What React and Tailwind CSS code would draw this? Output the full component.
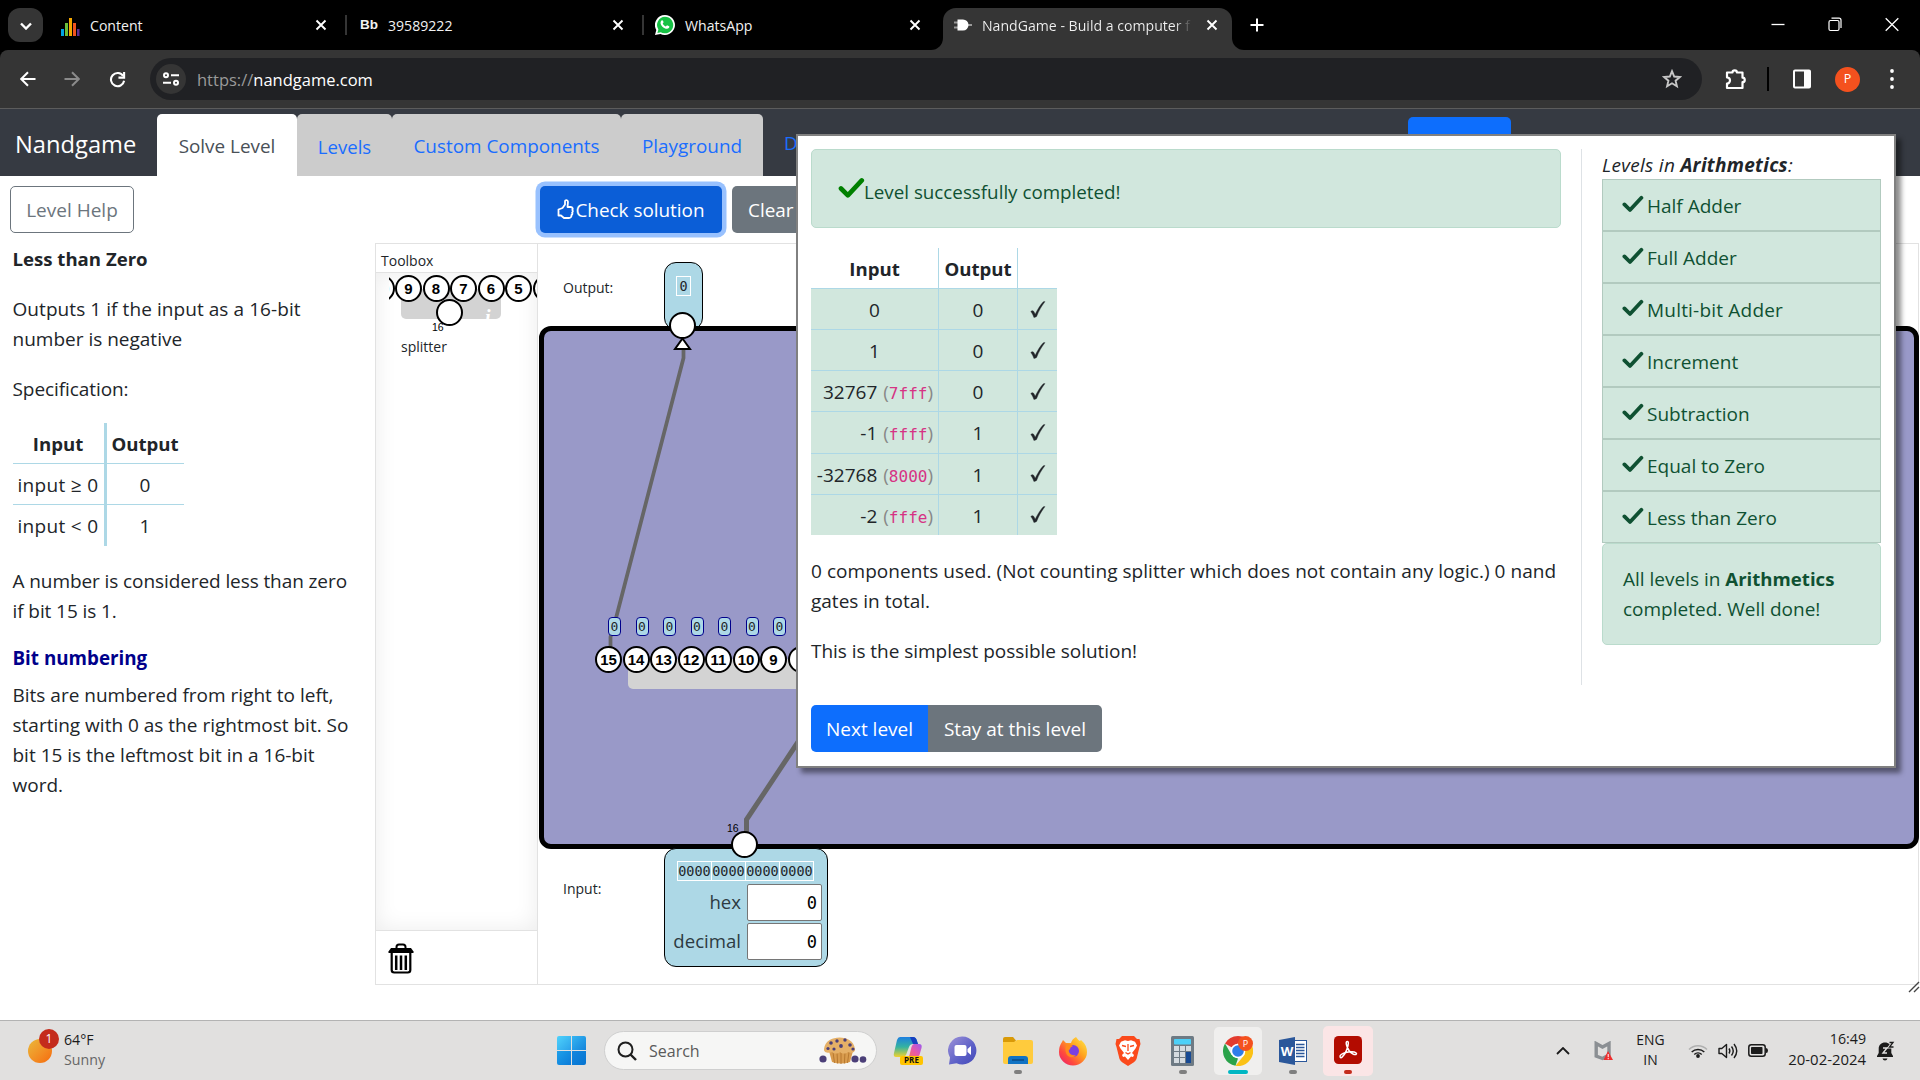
const DIGITS = "font-['DejaVu_Sans_Mono',monospace]";

function Check({ className }) {
  return (
    <svg viewBox="0 0 22 18" className={className} fill="none" stroke="currentColor" strokeWidth="3.8" strokeLinecap="round" strokeLinejoin="round">
      <path d="M2.4 9.4 8 15 19.4 2.8" />
    </svg>
  );
}

function CloseX({ className = "" }) {
  return (
    <svg viewBox="0 0 12 12" className={"size-3 shrink-0 " + className} fill="none" stroke="#fff" strokeWidth="1.9">
      <path d="M1.5 1.5 10.5 10.5M10.5 1.5 1.5 10.5" />
    </svg>
  );
}

function TabStrip() {
  return (
    <div className="flex h-[50px] bg-black text-[14.1px] leading-[50px] text-[#f2f2f2]">
      <div className="mt-2 ml-2 grid h-[34px] w-[35px] place-items-center rounded-xl bg-[#353535]">
        <svg viewBox="0 0 12 8" className="mt-px h-2 w-3" fill="none" stroke="#fff" strokeWidth="2.4"><path d="M1 1.5 6 6.5 11 1.5" /></svg>
      </div>
      <div className="flex w-[304px] items-center pl-[17px]">
        <svg viewBox="0 0 20 18" className="mt-1 h-[18px] w-5">
          <rect x="1" y="11" width="3" height="7" fill="#00a4e4" />
          <rect x="5" y="5" width="3" height="13" fill="#6bbf3a" />
          <rect x="9" y="0" width="3" height="18" fill="#f5a800" />
          <rect x="13" y="5" width="3" height="13" fill="#f0541e" />
          <rect x="17" y="11" width="2.5" height="7" fill="#5c2d91" />
        </svg>
        <span className="mt-px ml-[10px]">Content</span>
        <CloseX className="mr-[18px] ml-auto" />
        <span className="h-5 w-[2px] bg-[#353535]" />
      </div>
      <div className="flex w-[297px] items-center pl-[13px]">
        <span className="w-[28px] font-['Liberation_Sans',sans-serif] text-[13.5px]">
          <span className="font-bold">Bb</span>
        </span>
        <span className="mt-px">39589222</span>
        <CloseX className="mr-[18px] ml-auto" />
        <span className="h-5 w-[2px] bg-[#353535]" />
      </div>
      <div className="flex w-[299px] items-center pl-[11px]">
        <svg viewBox="0 0 20 20" className="size-5">
          <path d="M10 0a10 10 0 1 1-4.6 18.9L0 20l1.300-5A10 10 0 0 1 10 0z" fill="#fff" />
          <path d="M10 1.700a8.300 8.300 0 1 1-4.200 15.500L2.400 17.900l1-3.400A8.300 8.300 0 0 1 10 1.700z" fill="#16c144" />
          <path d="M6.500 5.500c.6-.6 1.200-.4 1.500.3l.6 1.500-.9 1.300c.7 1.400 1.700 2.300 3.100 2.900l1.200-1.200 1.700.8c.8.4.8 1 .3 1.700-1 1.300-2.600 1.300-4.300.5-2-1-3.400-2.500-4-4.300-.4-1.400 0-2.800.8-3.500z" fill="#fff" />
        </svg>
        <span className="mt-px ml-[10px]">WhatsApp</span>
        <CloseX className="mr-[22px] ml-auto" />
      </div>
      <div className="relative mt-2 flex h-[42px] w-[289px] items-center rounded-t-[13px] bg-[#353535] pl-[10px] leading-[34px] before:absolute before:bottom-0 before:-left-3 before:size-3 before:rounded-br-xl before:shadow-[4px_4px_0_4px_#353535] before:[clip-path:inset(0)] after:absolute after:-right-3 after:bottom-0 after:size-3 after:rounded-bl-xl after:shadow-[-4px_4px_0_4px_#353535] after:[clip-path:inset(0)]">
        <svg viewBox="0 0 20 14" className="mb-2 h-[14px] w-5">
          <path d="M1 4.500h5M1 9.500h5M14 7h5" stroke="#9a9a9a" strokeWidth="2" />
          <path d="M4.500 1.500h5.500a5.500 5.500 0 0 1 0 11H4.500z" fill="#fff" />
        </svg>
        <span className="mb-[7px] ml-[9px] w-[210px] overflow-hidden bg-linear-to-r from-[#f2f2f2] from-92% to-[#353535] bg-clip-text whitespace-nowrap text-transparent">NandGame - Build a computer f</span>
        <CloseX className="mb-2 ml-[14px]" />
      </div>
      <svg viewBox="0 0 14 14" className="mt-[18px] ml-[18px] size-[14px]" stroke="#fff" strokeWidth="2"><path d="M7 0.500v13M0.500 7h13" /></svg>
      <div className="mt-[17px] mr-[21px] ml-auto flex gap-[43px]">
        <svg viewBox="0 0 14 15" className="h-[15px] w-[14px]" stroke="#fff" strokeWidth="1.300"><path d="M.5 7.500h13" /></svg>
        <svg viewBox="0 0 14 15" className="h-[15px] w-[14px]" fill="none" stroke="#fff" strokeWidth="1.200"><rect x="1" y="3.500" width="10" height="10" rx="1.500" /><path d="M3.500 1.200H11a2 2 0 0 1 2 2v7.800" /></svg>
        <svg viewBox="0 0 14 15" className="h-[15px] w-[14px]" stroke="#fff" strokeWidth="1.300"><path d="M.7 1.200 13.300 13.800M13.300 1.200 .7 13.800" /></svg>
      </div>
    </div>
  );
}

function AddressBar() {
  return (
    <div className="bg-black">
      <div className="flex h-[58px] items-center rounded-t-lg bg-[#353535]">
        <svg viewBox="0 0 16 16" className="ml-5 size-4" fill="none" stroke="#fff" strokeWidth="2"><path d="M15.500 8H1.500M8 1.200 1.200 8 8 14.800" /></svg>
        <svg viewBox="0 0 16 16" className="ml-[28px] size-4" fill="none" stroke="#8b8b8b" strokeWidth="2"><path d="M.5 8h14M8 1.200 14.800 8 8 14.800" /></svg>
        <svg viewBox="0 0 18 18" className="ml-[29px] size-[17px]" fill="none" stroke="#fff" strokeWidth="2.200"><path d="M15 5.300A7 7 0 1 0 16 10.300" /><path d="M16 1v6h-6" /></svg>
        <div className="ml-[24px] flex h-[42px] w-[1552px] items-center rounded-full bg-[#202124]">
          <div className="ml-[6px] grid size-[30px] place-items-center rounded-full bg-[#353535]">
            <svg viewBox="0 0 16 14" className="h-[14px] w-4" fill="none" stroke="#fff" strokeWidth="2"><circle cx="3" cy="3.200" r="2" /><path d="M8 3.200h8M0 10.800h8" /><circle cx="13" cy="10.800" r="2" /></svg>
          </div>
          <span className="mt-0.5 ml-[11px] text-[16.5px] text-white"><span className="text-[#9a9a9a]">https://</span>nandgame.com</span>
          <svg viewBox="0 0 20 20" className="mr-[20px] ml-auto size-5" fill="none" stroke="#c7c7c7" strokeWidth="1.900"><path d="m10 2.200 2.200 5.300 5.700.5-4.300 3.700 1.300 5.600L10 14.300l-4.900 3 1.300-5.600L2.100 8l5.700-.5z" /></svg>
        </div>
        <svg viewBox="0 0 22 22" className="ml-[23px] size-[22px]" fill="none" stroke="#fff" strokeWidth="2.200" strokeLinejoin="round"><path d="M2 4.500h5.500a2.200 2.200 0 0 1 4.400 0H17.500v5.200a2.200 2.200 0 0 1 0 4.500V20H2v-4.500a3 3 0 0 0 0-6z" /></svg>
        <span className="ml-[20px] h-6 w-[2px] bg-black" />
        <svg viewBox="0 0 18 22" className="ml-[24px] h-[22px] w-[18px]"><rect x="1" y="2.500" width="16" height="17" rx="1" fill="none" stroke="#fff" strokeWidth="2" /><path d="M11 2h6v18h-6z" fill="#fff" /></svg>
        <span className="ml-[24px] grid size-[25px] place-items-center rounded-full bg-[#f4511e] text-[12.500px] text-white">P</span>
        <svg viewBox="0 0 4 20" className="ml-[30px] h-5 w-1" fill="#fff"><circle cx="2" cy="2" r="1.900" /><circle cx="2" cy="10" r="1.900" /><circle cx="2" cy="18" r="1.900" /></svg>
      </div>
    </div>
  );
}

function SiteHeader() {
  return (
    <div className="flex h-[68px] border-t border-[#5c5c5c] bg-[#363a42] text-[18.9px] text-[#1a6dff]">
      <span className="w-[157px] pt-[15px] pl-[15px] text-[23.7px] leading-[40px] text-white">Nandgame</span>
      <div className="mt-[5px] flex h-[62px] leading-[65px]">
        <span className="w-[140px] rounded-t-[5px] bg-white text-center text-[#495057]">Solve Level</span>
        <span className="w-[95px] rounded-t-[5px] bg-[#ccc] text-center text-[18.600px]">Levels</span>
        <span className="w-[229px] rounded-t-[5px] bg-[#ccc] text-center">Custom Components</span>
        <span className="w-[142px] rounded-t-[5px] bg-[#ccc] text-center">Playground</span>
      </div>
      <span className="w-16 pl-[21px] leading-[68px]">Discuss</span>
      <span className="mt-2 ml-[581px] h-[50px] w-[103px] rounded-[5px] bg-[#0d6efd]" />
    </div>
  );
}

function SpecTable() {
  const cell = "grid place-items-center h-[41px] ";
  return (
    <div className="mt-[19px] grid w-[171px] grid-cols-[94px_77px]">
      <div className={cell + "border-r-[3px] border-b border-[#add8e6] pt-0.5 text-[18.600px] font-bold"}>Input</div>
      <div className={cell + "border-b border-[#add8e6] pt-0.5 text-[18.600px] font-bold"}>Output</div>
      <div className={cell + "border-r-[3px] border-b border-[#add8e6] pt-px tracking-[0.320px]"}>input ≥ 0</div>
      <div className={cell + "border-b border-[#add8e6] pt-px"}>0</div>
      <div className={cell + "border-r-[3px] border-[#add8e6] tracking-[0.320px]"}>input &lt; 0</div>
      <div className={cell}>1</div>
    </div>
  );
}

function HelpPanel() {
  return (
    <div className="w-[375px] shrink-0 pt-[10px] text-[19px] leading-[30px]">
      <div className="ml-[10px] h-[47px] w-[124px] rounded-[5px] border border-[#6c757d] text-center leading-[46px] text-[#6c757d]">Level Help</div>
      <div className="ml-[12.500px] w-[350px]">
        <p className="mt-[11px] text-[18.600px] font-bold">Less than Zero</p>
        <p className="mt-5"><span className="tracking-[0.070px]">Outputs 1 if the input as a 16-bit</span><br />number is negative</p>
        <p className="mt-5 tracking-[-0.080px]">Specification:</p>
        <SpecTable />
        <p className="mt-5 tracking-[-0.090px]">A number is considered less than zero<br />if bit 15 is 1.</p>
        <p className="mt-[17px] text-[18.800px] font-bold text-[#00008b]">Bit numbering</p>
        <p className="mt-[7px]">Bits are numbered from right to left,<br />starting with 0 as the rightmost bit. So<br />bit 15 is the leftmost bit in a 16-bit<br />word.</p>
      </div>
    </div>
  );
}

function Pin({ children, className = "" }) {
  return <span className={"grid size-[27px] shrink-0 place-items-center rounded-full border-2 border-black bg-white font-['Liberation_Sans',sans-serif] text-[15px] leading-none font-bold text-black " + className}>{children}</span>;
}

function Toolbox() {
  return (
    <div className="flex w-[163px] shrink-0 flex-col border border-[#e2e2e2] text-[14px]">
      <div className="h-[29px] border-b border-[#e2e2e2] pl-[5px] leading-[33px]">Toolbox</div>
      <div className="relative h-[657px] shadow-[inset_0_0_22px_rgba(0,0,0,0.08)]">
        <div className="absolute inset-y-0 right-0 left-[13px] overflow-hidden">
          <div className="absolute top-4 left-[12px] h-[30px] w-[100px] overflow-hidden rounded-b-[5px] bg-[#d3d3d3]">
            <span className="absolute top-[16px] left-[84px] font-['Liberation_Serif',serif] text-[20px] leading-[24px] font-bold text-white italic">i</span>
          </div>
          <div className="absolute top-[2px] -left-[21.500px] flex gap-[0.500px]">
            {["10", "9", "8", "7", "6", "5", "4"].map((n) => <Pin key={n}>{n}</Pin>)}
          </div>
          <Pin className="absolute top-[26px] left-[47px]" />
          <span className="absolute top-[47px] left-[43px] font-['Liberation_Sans',sans-serif] text-[10.500px] leading-[15px] text-black">16</span>
          <span className="absolute top-[62px] left-[12px] leading-[24px]">splitter</span>
        </div>
      </div>
      <div className="border-t border-[#e2e2e2] pt-3 pl-[12px]">
        <svg viewBox="0 0 26 31" className="h-[31px] w-[26px]" fill="none" stroke="#000">
          <path d="M8.500 5V4a2.500 2.500 0 0 1 2.500-2.500h4A2.500 2.500 0 0 1 17.500 4v1" strokeWidth="2" />
          <path d="M3 5h20l2.500 3.500V10H.5V8.500z" fill="#000" stroke="none" />
          <path d="M3.700 9v18a2.500 2.500 0 0 0 2.500 2.500h13.600a2.500 2.500 0 0 0 2.500-2.500V9" strokeWidth="2.200" />
          <path d="M8.200 12.500v14.500M13 12.500v14.500M17.800 12.500v14.500" strokeWidth="2.500" />
        </svg>
      </div>
    </div>
  );
}

function Field({ label }) {
  return (
    <div className="flex h-[37px] items-center justify-end gap-[6px] text-[18.600px]">
      <span className="-mt-px text-[#2d3b42]">{label}</span>
      <span className={"h-[37px] w-[75px] rounded-[2px] border border-[#767676] bg-white pr-1 text-right text-[17px] leading-[37px] text-black " + DIGITS}>0</span>
    </div>
  );
}

function Canvas() {
  return (
    <div className="relative w-[1381px] border border-l-0 border-[#e2e2e2] text-[14px]">
      <span className="absolute top-[33px] left-[25px] leading-[22px]">Output:</span>
      <span className="absolute top-[634px] left-[25px] leading-[22px]">Input:</span>
      <div className="absolute top-[18px] left-[126px] flex h-[68px] w-[39px] justify-center rounded-[12px] border border-black bg-[#add8e6] pt-[13px]">
        <span className={"h-5 w-[15px] border border-white text-center text-[13.500px] leading-[18px] " + DIGITS}>0</span>
      </div>
      <div className="absolute top-[82px] left-[1px] h-[523px] w-[1380px] rounded-[12px] border-[5px] border-black bg-[#9999c8]" />
      <svg viewBox="0 0 1380 740" className="absolute top-0 left-0 h-[740px] w-[1380px]" fill="none" stroke="#666">
        <path d="M145.500 104v10L77 378l-4.500 15v12" strokeWidth="3.750" />
        <path d="M208.500 592v-16.500L262 495" strokeWidth="5" />
        <path d="M144.500 94.500 152 105h-15z" fill="#fff" stroke="#000" strokeWidth="2" />
      </svg>
      <Pin className="absolute top-[68px] left-[131px]" />
      <div className="absolute top-[373px] left-[70px] flex gap-[14.500px]">
        {[15, 14, 13, 12, 11, 10, 9].map((n) => (
          <span key={n} className={"h-[19px] w-[13px] rounded-[4px] border border-[#00008b] bg-[#add8e6] text-center text-[13px] leading-[17px] " + DIGITS}>0</span>
        ))}
      </div>
      <div className="absolute top-[415px] left-[90px] h-[30px] w-[350px] rounded-[5px] bg-[#d3d3d3]" />
      <div className="absolute top-[402px] left-[57px] flex gap-[0.500px]">
        {[15, 14, 13, 12, 11, 10, 9, 8].map((n) => <Pin key={n}>{n}</Pin>)}
      </div>
      <div className="absolute top-[604px] left-[126px] flex h-[119px] w-[164px] flex-col rounded-[12px] border border-black bg-[#add8e6] pr-[5px]">
        <div className={"mt-[12px] mb-[3px] ml-[12px] flex h-5 w-[137px] border-l border-white text-[13.500px] leading-[19px] " + DIGITS}>
          {[0, 1, 2, 3].map((n) => <span key={n} className="w-[34px] border-y border-r border-white text-center">0000</span>)}
        </div>
        <Field label="hex" />
        <div className="h-[2px]" />
        <Field label="decimal" />
      </div>
      <Pin className="absolute top-[587px] left-[193px]" />
      <span className="absolute top-[577px] left-[189px] font-['Liberation_Sans',sans-serif] text-[10.500px] leading-[15px] text-black">16</span>
      <svg viewBox="0 0 12 12" className="absolute top-[737px] left-[1370px] size-3" stroke="#444" strokeWidth="1.400"><path d="M1 11 11 1M6 11l5-5" /></svg>
    </div>
  );
}

function Workspace() {
  return (
    <div>
      <div className="flex h-[67px] pt-[10px] pl-[165px] text-[18.900px] leading-[47px] text-white">
        <div className="flex h-[47px] w-[182px] items-center justify-center rounded-[5px] bg-[#0b5ed7] ring-[4.500px] ring-[#98c1fe]">
          <svg viewBox="0 0 17 21" className="mr-px h-[21px] w-[17px]" fill="none" stroke="#fff" strokeWidth="1.800" strokeLinejoin="round">
            <path d="M1.500 10.500 5.500 9 8 5.500V2.500C8 .6 10.800.6 11 2.800L10.500 8h3.200c2 0 2.400 1.800 1.600 3 .8.900.6 2-.2 2.600.5 1 .2 2-.6 2.500.1 1.900-1 2.900-2.500 2.900H7L4 16.500H1.500z" />
          </svg>
          <span className="pt-px">Check solution</span>
        </div>
        <div className="ml-[10px] h-[47px] w-[80px] rounded-[5px] bg-[#6c757d] pt-px pl-4">Clear</div>
      </div>
      <div className="flex h-[742px]">
        <Toolbox />
        <Canvas />
      </div>
    </div>
  );
}

const results = [
  ["0", null, "0"],
  ["1", null, "0"],
  ["32767", "7fff", "0"],
  ["-1", "ffff", "1"],
  ["-32768", "8000", "1"],
  ["-2", "fffe", "1"],
];

function ResultTable() {
  return (
    <div className="mt-5 grid w-[246px] grid-cols-[128px_79px_39px]">
      <div className="grid h-[40px] place-items-center border-r border-[#add8e6] pt-0.5 text-[18.600px] font-bold">Input</div>
      <div className="grid h-[40px] place-items-center border-r border-[#add8e6] pt-0.5 text-[18.600px] font-bold">Output</div>
      <div />
      {results.map(([value, hex, out]) => (
        <div key={value} className="col-span-3 grid h-[41.150px] grid-cols-subgrid overflow-hidden border-t border-[#add8e6] bg-[#d1e7dd] leading-[42px]">
          <div className={"border-r border-[#add8e6] whitespace-pre " + (hex ? "pr-[5px] text-right" : "text-center")}>
            {value}
            {hex && <span className="ml-[6px] text-[#888]">(<code className={"text-[16px] text-[#d63384] " + DIGITS}>{hex}</code>)</span>}
          </div>
          <div className="border-r border-[#add8e6] text-center">{out}</div>
          <div className="grid h-[40px] place-items-center">
            <svg viewBox="0 0 16 17" className="h-[17px] w-4" fill="#212529" stroke="#212529" strokeWidth=".4"><path d="M.8 10.500C2 9.200 3.400 9.500 4.100 11l1.100 2.300C7.500 8.500 10.400 3.800 13.300.8L15 .6C11.500 5 8.700 10 6.600 15.500c-1 .6-2 .9-2.700.9C3.200 14.200 2.200 12 .8 10.500z" /></svg>
          </div>
        </div>
      ))}
    </div>
  );
}

function CompletedDialog() {
  const levels = ["Half Adder", "Full Adder", "Multi-bit Adder", "Increment", "Subtraction", "Equal to Zero", "Less than Zero"];
  return (
    <div className="absolute top-[134px] left-[796px] flex h-[634px] w-[1100px] border-2 border-[#808080] bg-white text-[19px] leading-[30px] shadow-[5px_5px_5px_rgba(0,0,0,0.45)]">
      <div className="w-[783px] pt-[13px] pl-[13px]">
        <div className="flex h-[79px] w-[750px] items-center rounded-[5px] border border-[#badbcc] bg-[#d1e7dd] pt-[7px] pl-[26px] text-[18.800px] text-[#0f5132]">
          <Check className="-mr-px mb-[8px] h-[22px] w-[27px] text-[#008000]" />
          <span>Level successfully completed!</span>
        </div>
        <ResultTable />
        <p className="mt-[21px] whitespace-nowrap"><span className="tracking-[0.045px]">0 components used. (Not counting splitter which does not contain any logic.) 0 nand</span><br />gates in total.</p>
        <p className="mt-5 tracking-[-0.040px]">This is the simplest possible solution!</p>
        <div className="mt-[39px] flex h-[47px] pb-px text-center leading-[49px] text-white">
          <span className="h-[47px] w-[117px] rounded-l-[5px] bg-[#0d6efd]">Next level</span>
          <span className="h-[47px] w-[174px] rounded-r-[5px] bg-[#6c757d]">Stay at this level</span>
        </div>
      </div>
      <div className="mt-[13px] h-[536px] w-[300px] border-l border-[#dee2e6] pl-5">
        <div className="mt-px h-[29px] text-[19px] tracking-[0.300px] whitespace-pre italic">Levels in <b>Arithmetics</b>:</div>
        <div className="border border-[#b2cabf]">
          {levels.map((name) => (
            <div key={name} className="flex h-[52px] items-center border-b-2 border-[#b2cabf] bg-[#d1e7dd] pt-px pl-5 text-[#0f5132] last:h-[50px] last:border-b-0">
              <Check className="-ml-px mb-1 h-[18px] w-[22px]" />
              <span className={"ml-[3px] " + (name === "Multi-bit Adder" ? "tracking-[0.200px]" : "")}>{name}</span>
            </div>
          ))}
        </div>
        <div className="h-[102px] rounded-[5px] border border-[#badbcc] bg-[#d1e7dd] pt-5 pl-5 text-[#0f5132]">
          All levels in <b className="text-[18.600px]">Arithmetics</b><br />completed. Well done!
        </div>
      </div>
    </div>
  );
}

function Muffin() {
  return (
    <svg viewBox="0 0 48 27" className="h-[27px] w-12">
      <path d="M10 14h24l-3 11q-9 3-18 0z" fill="#d99c4e" />
      <path d="M14 15l1.500 11M18 15l.6 11.500M22 15v12M26 15l-.6 11.500M30 15l-1.500 11" stroke="#b3752c" strokeWidth=".9" />
      <path d="M5 12C6 4 13 .5 20.500.5S35 4 36 12c.5 4-5 4.500-7 3-2 2-6 2-8 0-2 2-6 2-8 0-3 1.500-8.500 1-8-3z" fill="#e5b067" />
      <g fill="#4b3f78"><circle cx="12" cy="6" r="1.800" /><circle cx="18" cy="4" r="1.700" /><circle cx="26" cy="3" r="1.700" /><circle cx="31" cy="8" r="1.800" /><circle cx="22" cy="9" r="1.900" /><circle cx="9" cy="11.500" r="1.600" /><circle cx="15" cy="12" r="1.600" /><circle cx="34" cy="12" r="1.600" /><circle cx="4" cy="22" r="3.600" /><circle cx="36" cy="22" r="3.600" /><circle cx="44" cy="22.500" r="3.300" /></g>
    </svg>
  );
}

function TaskIcons() {
  return (
    <div className="flex items-center">
      <svg viewBox="0 0 30 30" className="ml-[16px] size-[30px]">
        <defs>
          <linearGradient id="copA" x1="0" y1="0" x2="0" y2="1"><stop offset="0" stopColor="#1d7fe0" /><stop offset=".5" stopColor="#35b3a0" /><stop offset="1" stopColor="#f2d32e" /></linearGradient>
          <linearGradient id="copB" x1="0" y1="1" x2="1" y2="0"><stop offset="0" stopColor="#f67a50" /><stop offset=".5" stopColor="#e858a8" /><stop offset="1" stopColor="#9c5cf0" /></linearGradient>
        </defs>
        <path d="M7 1h13q3 0 4 4l1 3h-5q-3 0-4 3l-3 8q-1 2-4 2H3q-3 0-2-4L4 4q1-3 3-3z" fill="url(#copA)" />
        <path d="M17 1h3q3 0 4 4l1 3h-5z" fill="#1740c0" />
        <path d="M21 8h5q3.500 0 2.500 4l-2 7q-1 3-4 3h-9q2 0 3-3l2-8q1-3 2.500-3z" fill="url(#copB)" />
        <rect x="7" y="20" width="23" height="9" rx="2" fill="#ffc400" />
        <text x="18.500" y="27.400" textAnchor="middle" fontSize="8" fontWeight="700" fontFamily="Open Sans, sans-serif" fill="#111">PRE</text>
      </svg>
      <svg viewBox="0 0 29 29" className="ml-[25px] size-[29px]">
        <defs><linearGradient id="chat" x1="0" y1="0" x2="1" y2="1"><stop offset="0" stopColor="#9f93d8" /><stop offset=".6" stopColor="#5b5fc7" /><stop offset="1" stopColor="#4349b8" /></linearGradient></defs>
        <path d="M14.500.5a14 14 0 1 1-6 26.700L1 28.500l1-7A14 14 0 0 1 14.500.5z" fill="url(#chat)" />
        <rect x="6.500" y="9" width="12" height="11" rx="2" fill="#fff" /><path d="m19.500 13 3.500-3v9l-3.500-3z" fill="#fff" />
      </svg>
      <svg viewBox="0 0 30 27" className="ml-[26px] h-[27px] w-[30px]">
        <path d="M0 2Q0 0 2 0h8l3 3.500L10 7H0z" fill="#d99a08" /><path d="M0 5h11l3-2h14q2 0 2 2v20q0 2-2 2H2q-2 0-2-2z" fill="#ffcb3d" />
        <path d="M5 27v-5q0-3 3-3h14q3 0 3 3v5z" fill="#1173c4" /><path d="M9 23h12" stroke="#0b4a86" strokeWidth="1.500" />
      </svg>
      <svg viewBox="0 0 30 30" className="ml-[25px] size-[30px]">
        <defs><linearGradient id="fox" x1="1" y1="0" x2="0" y2="1"><stop offset="0" stopColor="#fff04a" /><stop offset=".4" stopColor="#ffa21f" /><stop offset=".7" stopColor="#ff4a3d" /><stop offset="1" stopColor="#e5177c" /></linearGradient></defs>
        <path d="M18 1q2 3 4 4l1-1q6 5 6 12a14 13.500 0 0 1-28 0Q1 10 4 6l1-2 3 3h5q1-4 5-6z" fill="url(#fox)" />
        <circle cx="15" cy="15" r="6" fill="#7a3fe0" /><path d="M8 9q4-2 7 1-3 1-3 3-2 1-1 3 2 4 7 3-3 4-8 1-4-4-2-11z" fill="#ff8a1c" />
      </svg>
      <svg viewBox="0 0 26 30" className="ml-[27px] h-[30px] w-[26px]">
        <path d="M7 0h12l3 3h2.500L25.500 8l-1 3-3 12q-1 2-3 3.500L13 30l-5.500-3.500q-2-1.500-3-3.500l-3-12-1-3L1.500 3H4z" fill="#fb4a1c" />
        <path d="m13 5 3-.8 4 1.500 2 3.800-1.500 3L17 17l2 2-1 2-2-.5-3 3.500-3-3.500-2 .5-1-2 2-2-3.500-4.500L4 9.500l2-3.800 4-1.500z" fill="#fff" />
        <path d="m7 9.500 4 1M19 9.500l-4 1M13 8v7m-2.500 1.500L13 18l2.500-1.500" stroke="#fb4a1c" strokeWidth="1.300" fill="none" />
      </svg>
      <svg viewBox="0 0 23 30" className="ml-[30px] h-[30px] w-[23px]">
        <rect width="23" height="30" rx="1.500" fill="#6e7a84" /><rect x="3" y="3" width="17" height="5.500" rx=".8" fill="#4cd0f8" />
        <path d="M3 10h5v5H3zM9 10h5v5H9zM15 10h5v5h-5zM3 16h5v5H3zM9 16h5v5H9zM3 22h5v5H3zM9 22h5v5H9z" fill="#d5dbe0" /><path d="M15 16h5v11h-5z" fill="#174a94" />
      </svg>
      <div className="ml-[20px] grid size-12 place-items-center rounded-[5px] bg-[#f0efee]">
        <svg viewBox="0 0 30 30" className="size-[30px]">
          <path d="M15 0a15 15 0 0 1 13 7.500H15L8.500 11.300 2 7.500A15 15 0 0 1 15 0z" fill="#e33b2e" />
          <path d="M2 7.500 8.500 18.700 15 22.500 12.500 29.800A15 15 0 0 1 2 7.500z" fill="#2aa24a" />
          <path d="M28 7.500A15 15 0 0 1 12.500 29.800L21.500 18.700V11.300L15 7.500z" fill="#fbc116" />
          <circle cx="15" cy="15" r="7.300" fill="#fff" /><circle cx="15" cy="15" r="5.800" fill="#2f7de9" />
          <circle cx="22.500" cy="7.500" r="7.500" fill="#f4511e" /><text x="22.500" y="11" textAnchor="middle" fontSize="9" fontFamily="Open Sans, sans-serif" fill="#fff">P</text>
        </svg>
      </div>
      <svg viewBox="0 0 28 28" className="ml-[17px] size-7">
        <rect x="14" y="3.500" width="13.500" height="21" fill="#fff" stroke="#2b579a" /><path d="M17 7.500h8.500M17 10.500h8.500M17 13.500h8.500M17 16.500h8.500M17 19.500h8.500" stroke="#2b579a" strokeWidth="1.300" />
        <path d="M0 3 16 0v28L0 25z" fill="#2b579a" /><text x="8" y="18.500" textAnchor="middle" fontSize="13" fontWeight="700" fontFamily="Open Sans, sans-serif" fill="#fff">W</text>
      </svg>
      <div className="ml-[16px] grid size-[50px] place-items-center rounded-[5px] bg-[#fbe5e6]">
        <svg viewBox="0 0 28 28" className="mb-0.5 size-7">
          <rect width="28" height="28" rx="4.500" fill="#b30b00" />
          <path d="M13.500 5.500c-2.500 0-1 5 1.500 9 2 3 5.500 4.500 7 4 1.500-1-.5-2.800-4-2.800-4 0-8.500 1-10.800 2.800-2.400 2-.7 4.300 1 2.500 2.500-2.500 5-8 5.800-11.500.5-2.500.5-4-.5-4z" fill="none" stroke="#fff" strokeWidth="1.500" />
        </svg>
      </div>
    </div>
  );
}

function Taskbar() {
  return (
    <div className="relative flex h-[60px] items-center border-t border-[#b3b3b3] bg-[#e1e0df] text-[14.200px] text-[#1b1b1b]">
      <div className="relative ml-7 h-6 w-6 rounded-full bg-linear-to-br from-[#e9b83a] to-[#f5690a]">
        <span className="absolute -top-[10px] left-[11px] grid size-5 place-items-center rounded-full bg-[#c42b1c] text-[12px] leading-none text-white">1</span>
      </div>
      <div className="-mt-0.5 ml-[12px] w-[493px] leading-[20px]">64°F<br /><span className="text-[#666]">Sunny</span></div>
      <div className="grid size-[29px] grid-cols-2 gap-px overflow-hidden rounded-[2px]">
        <span className="bg-linear-to-br from-[#4fd2fb] to-[#2ba2ea]" /><span className="bg-linear-to-br from-[#35b5f2] to-[#1484db]" />
        <span className="bg-linear-to-br from-[#1fa0ea] to-[#0c7bd8]" /><span className="bg-linear-to-br from-[#1286df] to-[#0674d0]" />
      </div>
      <div className="ml-[18px] flex h-[39px] w-[273px] items-center rounded-full border border-[#cfcfcf] bg-[#f6f6f5]">
        <svg viewBox="0 0 20 20" className="ml-[12px] size-5" fill="none" stroke="#1f1f1f" strokeWidth="2"><circle cx="8.500" cy="8.500" r="7" /><path d="m13.500 13.500 5.500 5.500" strokeWidth="2.400" /></svg>
        <span className="ml-[12px] text-[16px] text-[#5a5a5a]">Search</span>
        <div className="mr-[9px] ml-auto"><Muffin /></div>
      </div>
      <TaskIcons />
      <span className="absolute bottom-[6px] left-[1014px] h-1 w-2 rounded-full bg-[#7f7f7f]" />
      <span className="absolute bottom-[6px] left-[1179px] h-1 w-2 rounded-full bg-[#7f7f7f]" />
      <span className="absolute bottom-[6px] left-[1228px] h-1 w-5 rounded-full bg-[#00b7c3]" />
      <span className="absolute bottom-[6px] left-[1289px] h-1 w-2 rounded-full bg-[#7f7f7f]" />
      <span className="absolute bottom-[6px] left-[1344px] h-1 w-2 rounded-full bg-[#c42b1c]" />
      <svg viewBox="0 0 14 8" className="ml-[183px] h-2 w-[14px]" fill="none" stroke="#1b1b1b" strokeWidth="1.800"><path d="M1 7 7 1l6 6" /></svg>
      <svg viewBox="0 0 19 20" className="ml-[24px] h-5 w-[19px]">
        <path d="M2.200 2.500 8.500 6l6.500-3.500V14l-6.500 3.500L2.200 15z" fill="none" stroke="#8b8f93" strokeWidth="3.400" />
        <path d="m14 10 5 9H9.500z" fill="#ee2d2d" /><path d="M14.200 13v3.200M14.200 17v1.200" stroke="#fff" />
      </svg>
      <div className="-mt-0.5 ml-[22px] w-[31px] text-center text-[13.900px] leading-[20px]">ENG<br />IN</div>
      <svg viewBox="0 0 20 15" className="ml-[22px] h-[15px] w-5" fill="none" strokeWidth="1.500">
        <path d="M1 6.500a12.500 12.500 0 0 1 18 0" stroke="#b0b0b0" /><path d="M3.700 9a9 9 0 0 1 12.600 0M6.300 11.500a5.500 5.500 0 0 1 7.400 0" stroke="#1b1b1b" /><circle cx="10" cy="13" r="1.900" fill="#1b1b1b" />
      </svg>
      <svg viewBox="0 0 20 18" className="ml-[10px] h-[18px] w-5" fill="none" stroke="#1b1b1b" strokeWidth="1.400">
        <path d="M1 6.500h2.800L8.500 2.500v13L3.800 11.500H1z" strokeLinejoin="round" /><path d="M11 6.500q1.700 2.500 0 5M13.500 4.500q3.500 4.500 0 9" /><path d="M16 2q5.500 7 0 14" />
      </svg>
      <svg viewBox="0 0 20 13" className="ml-[10px] h-[13px] w-5"><rect x=".8" y=".8" width="16.400" height="11.400" rx="2.500" fill="none" stroke="#1b1b1b" strokeWidth="1.500" /><rect x="3" y="3" width="11.500" height="7" rx=".8" fill="#1b1b1b" /><path d="M18 4q2 0 2 2.500T18 9z" fill="#1b1b1b" /></svg>
      <div className="-mt-0.5 ml-[18px] w-[80px] text-right leading-[20px]">16:49<br /><span className="text-[14.900px]">20-02-2024</span></div>
      <svg viewBox="0 0 18 20" className="ml-[11px] h-5 w-[18px]" fill="#1b1b1b">
        <path d="M8 1.500c3.600 0 6.300 2.600 6.300 6v4.500l1.700 3v1H0v-1l1.700-3V7.500c0-3.400 2.700-6 6.300-6zM5.500 17.500h5Q10 19.500 8 19.500T5.500 17.500z" />
        <path d="M6 7h4l-4 5h4" fill="none" stroke="#e1e0df" strokeWidth="1.400" /><path d="M12.500 1.500h3.500l-3.500 4.500H16.500" fill="none" stroke="#e1e0df" strokeWidth="3" /><path d="M12.500 1.500h3.500l-3.500 4.500H16.500" fill="none" stroke="#1b1b1b" strokeWidth="1.300" />
      </svg>
    </div>
  );
}

export default function App() {
  return (
    <div className="relative flex h-[1080px] w-[1920px] flex-col overflow-hidden bg-white font-['Open_Sans','Noto_Sans',sans-serif] text-[#212529]">
      <TabStrip />
      <AddressBar />
      <SiteHeader />
      <div className="flex h-[844px]">
        <HelpPanel />
        <Workspace />
      </div>
      <Taskbar />
      <CompletedDialog />
    </div>
  );
}
